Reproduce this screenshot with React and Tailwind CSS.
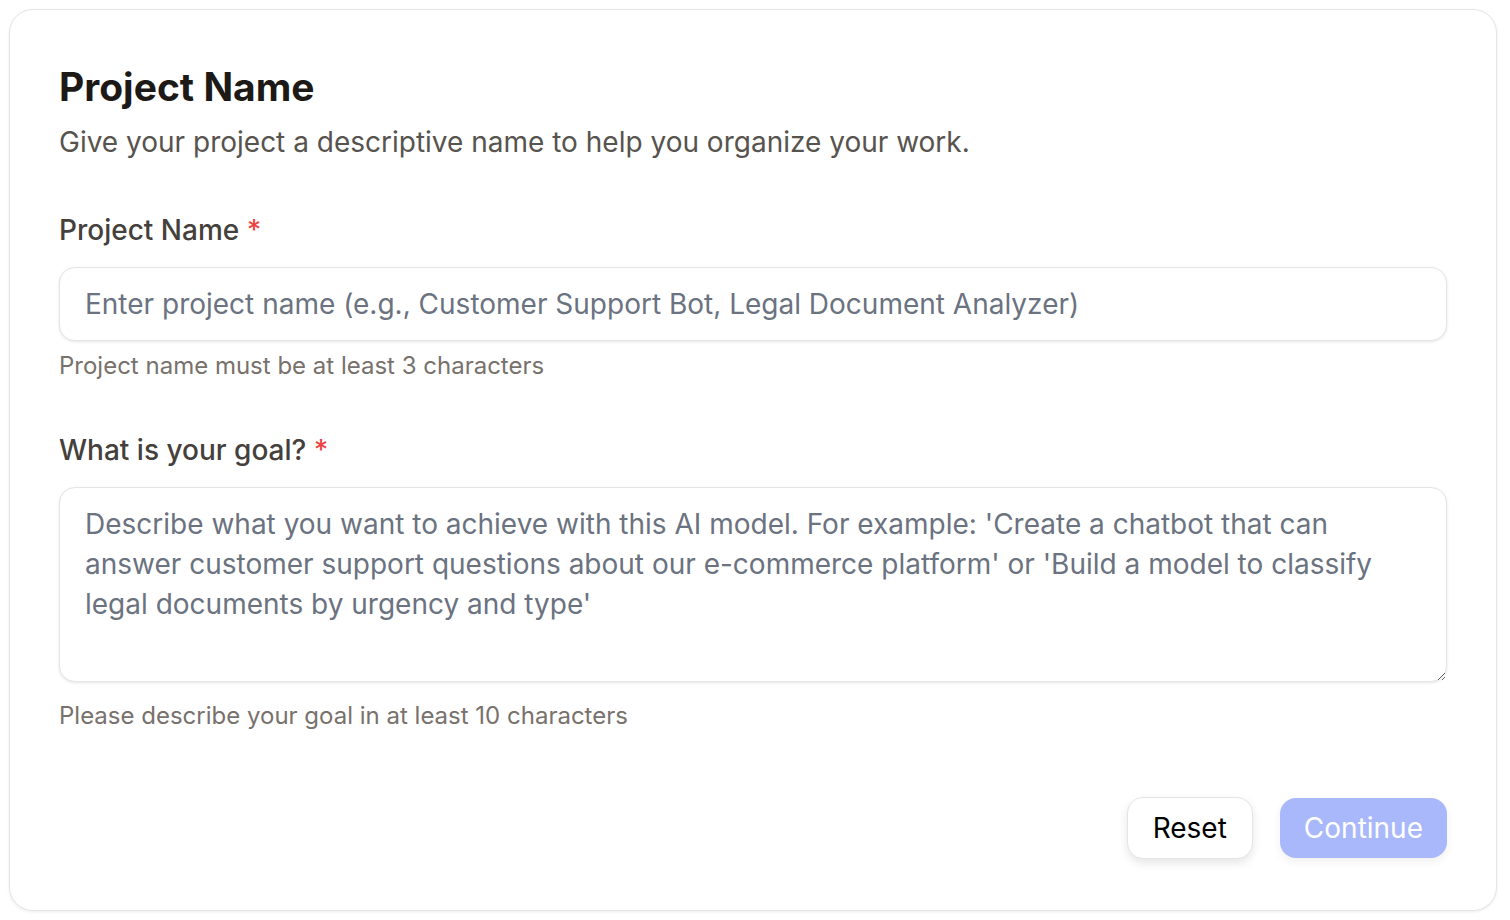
import { useState } from 'react';

export default function App() {
  const [name, setName] = useState('');
  const [goal, setGoal] = useState('');

  const reset = () => {
    setName('');
    setGoal('');
  };

  const valid = name.trim().length >= 3 && goal.trim().length >= 10;

  return (
    <div className="min-h-screen bg-white pt-[9px] pl-[9px] pr-[13px] pb-[9px] font-['Inter',sans-serif]">
      <div className="rounded-[24px] border border-[#e5e5e5] bg-white px-[49px] pt-[53px] pb-[51px] shadow-[0_1px_3px_rgba(0,0,0,0.08)]">
        <h1 className="text-[39px] font-bold leading-[48px] text-[#1c1917]">Project Name</h1>
        <p className="mt-[13px] text-[28px] leading-[36px] text-[#57534e]">
          Give your project a descriptive name to help you organize your work.
        </p>

        <div className="mt-[52px]">
          <label className="block text-[28px] font-medium leading-[36px] text-[#44403c]">
            Project Name <span className="text-[#ef4444]">*</span>
          </label>
          <input
            value={name}
            onChange={e => setName(e.target.value)}
            placeholder="Enter project name (e.g., Customer Support Bot, Legal Document Analyzer)"
            className="mt-[19px] block w-full rounded-[16px] border border-[#e5e5e5] bg-white px-[25px] py-[16px] text-[28px] leading-[40px] text-[#1c1917] shadow-[0_1px_3px_rgba(0,0,0,0.1)] outline-none placeholder:text-[#6b7280]"
          />
          <p className="mt-[9px] text-[24px] leading-[32px] text-[#78716c]">Project name must be at least 3 characters</p>
        </div>

        <div className="mt-[50px]">
          <label className="block text-[28px] font-medium leading-[36px] text-[#44403c]">
            What is your goal? <span className="text-[#ef4444]">*</span>
          </label>
          <textarea
            value={goal}
            onChange={e => setGoal(e.target.value)}
            rows={4}
            placeholder="Describe what you want to achieve with this AI model. For example: 'Create a chatbot that can answer customer support questions about our e-commerce platform' or 'Build a model to classify legal documents by urgency and type'"
            className="mt-[19px] block h-[195px] w-full resize-y rounded-[16px] border border-[#e5e5e5] bg-white px-[25px] py-[16px] text-[28px] leading-[40px] text-[#1c1917] shadow-[0_1px_3px_rgba(0,0,0,0.1)] outline-none placeholder:text-[#6b7280]"
          />
          <p className="mt-[18px] text-[24px] leading-[32px] text-[#78716c]">Please describe your goal in at least 10 characters</p>
        </div>

        <div className="mt-[65px] flex items-center justify-end gap-[27px]">
          <button
            onClick={reset}
            className="h-[62px] rounded-[16px] border border-[#e5e5e5] bg-white px-[25px] text-[28px] font-normal text-black shadow-[0_4px_10px_rgba(0,0,0,0.1)]"
          >
            Reset
          </button>
          <button
            disabled={!valid}
            className={valid
              ? "h-[60px] rounded-[16px] bg-[#6376f5] px-[24px] text-[28px] font-normal text-white shadow-[0_4px_10px_rgba(0,0,0,0.06)]"
              : "h-[60px] rounded-[16px] bg-[#a9b8fa] px-[24px] text-[28px] font-normal text-white shadow-[0_4px_10px_rgba(0,0,0,0.06)]"}
          >
            Continue
          </button>
        </div>
      </div>
    </div>
  );
}
